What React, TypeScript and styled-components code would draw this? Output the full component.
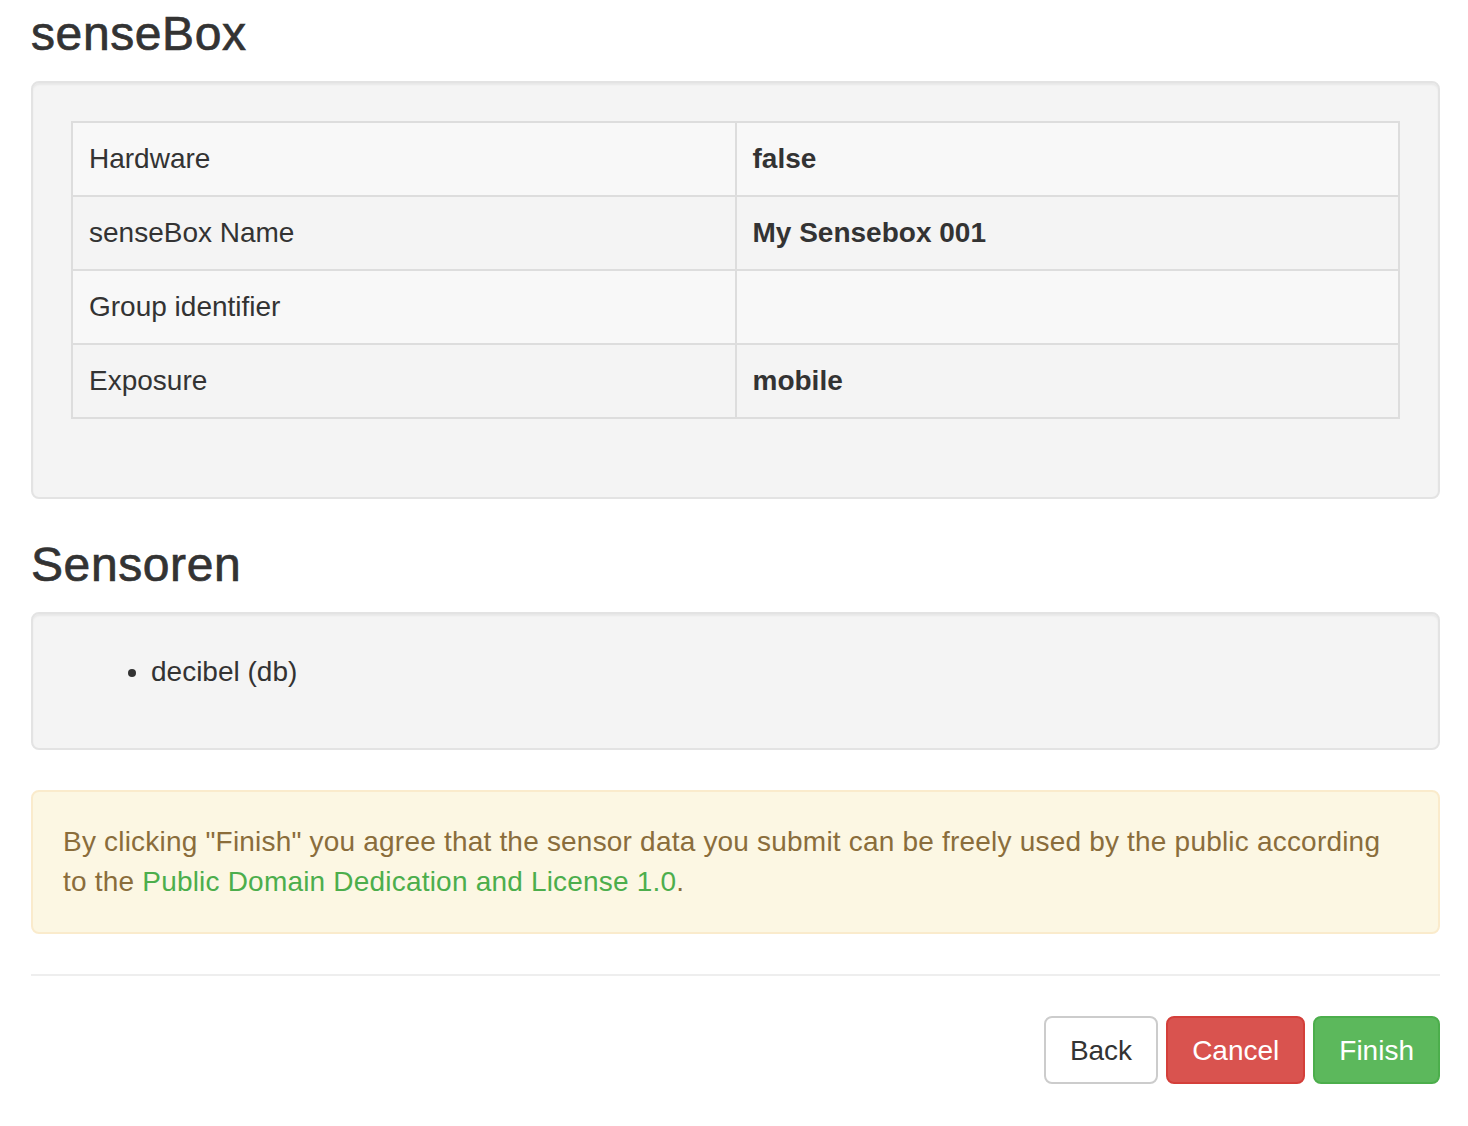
import React from "react";
import styled, { createGlobalStyle } from "styled-components";

const GlobalStyle = createGlobalStyle`
  html, body {
    margin: 0;
    padding: 0;
    background: #ffffff;
  }
  body {
    font-family: "Liberation Sans", Arial, Helvetica, sans-serif;
    font-size: 28px;
    line-height: 40px;
    color: #333333;
  }
  * { box-sizing: border-box; }
`;

const Page = styled.div`
  padding: 0 28px 40px 31px;
  display: flow-root;
`;

const Heading = styled.h3<{ $first?: boolean }>`
  font-family: "Liberation Sans", Arial, Helvetica, sans-serif;
  font-size: 48px;
  font-weight: 500;
  line-height: 1.1;
  letter-spacing: 0.6px;
  -webkit-text-stroke: 0.7px #333333;
  color: #333333;
  margin: ${(p) => (p.$first ? "8px" : "40px")} 0 20px;
`;

const Well = styled.div`
  background: #f4f4f4;
  border: 2px solid #e3e3e3;
  border-radius: 8px;
  padding: 38px;
  margin-bottom: 40px;
  box-shadow: inset 0 2px 2px rgba(0, 0, 0, 0.05);
`;

const Table = styled.table`
  width: 100%;
  border-collapse: collapse;
  border-spacing: 0;
  border: 2px solid #dddddd;
  margin-bottom: 40px;
  table-layout: fixed;
`;

const Row = styled.tr<{ $striped?: boolean }>`
  background: ${(p) => (p.$striped ? "#f8f8f8" : "transparent")};
`;

const Cell = styled.td<{ $bold?: boolean }>`
  border: 2px solid #dddddd;
  padding: 16px;
  line-height: 40px;
  height: 74px;
  font-weight: ${(p) => (p.$bold ? 700 : 400)};
  vertical-align: top;
`;

const List = styled.ul`
  margin: 0 0 18px;
  padding-left: 80px;
`;

const Item = styled.li`
  line-height: 40px;
`;

const Alert = styled.div`
  background: #fcf7e3;
  border: 2px solid #faebcc;
  border-radius: 8px;
  padding: 30px 34px 30px 30px;
  margin-bottom: 40px;
  color: #8a6d3b;
  letter-spacing: 0.2px;
`;

const Link = styled.a`
  color: #4cae4c;
  text-decoration: none;
`;

const Rule = styled.hr`
  border: 0;
  border-top: 2px solid #eeeeee;
  margin: 40px 0;
`;

const Actions = styled.div`
  display: flex;
  justify-content: flex-end;
  gap: 8px;
`;

const variants = {
  default: { bg: "#ffffff", border: "#cccccc", color: "#333333" },
  danger: { bg: "#d9534f", border: "#d43f3a", color: "#ffffff" },
  success: { bg: "#5cb85c", border: "#4cae4c", color: "#ffffff" },
};

const Button = styled.button<{ $variant: keyof typeof variants }>`
  font-family: "Liberation Sans", Arial, Helvetica, sans-serif;
  font-size: 28px;
  line-height: 40px;
  padding: 13px 24px 11px;
  border-radius: 8px;
  border: 2px solid ${(p) => variants[p.$variant].border};
  background: ${(p) => variants[p.$variant].bg};
  color: ${(p) => variants[p.$variant].color};
  cursor: pointer;
`;

const rows: { label: string; value: string }[] = [
  { label: "Hardware", value: "false" },
  { label: "senseBox Name", value: "My Sensebox 001" },
  { label: "Group identifier", value: "" },
  { label: "Exposure", value: "mobile" },
];

export default function App() {
  return (
    <>
      <GlobalStyle />
      <Page>
        <Heading $first>senseBox</Heading>
        <Well>
          <Table>
            <tbody>
              {rows.map((r, i) => (
                <Row key={r.label} $striped={i % 2 === 0}>
                  <Cell>{r.label}</Cell>
                  <Cell $bold>{r.value}</Cell>
                </Row>
              ))}
            </tbody>
          </Table>
        </Well>
        <Heading>Sensoren</Heading>
        <Well>
          <List>
            <Item>decibel (db)</Item>
          </List>
        </Well>
        <Alert>
          By clicking "Finish" you agree that the sensor data you submit can be
          freely used by the public according to the{" "}
          <Link href="#">Public Domain Dedication and License 1.0</Link>.
        </Alert>
        <Rule />
        <Actions>
          <Button $variant="default">Back</Button>
          <Button $variant="danger">Cancel</Button>
          <Button $variant="success">Finish</Button>
        </Actions>
      </Page>
    </>
  );
}
